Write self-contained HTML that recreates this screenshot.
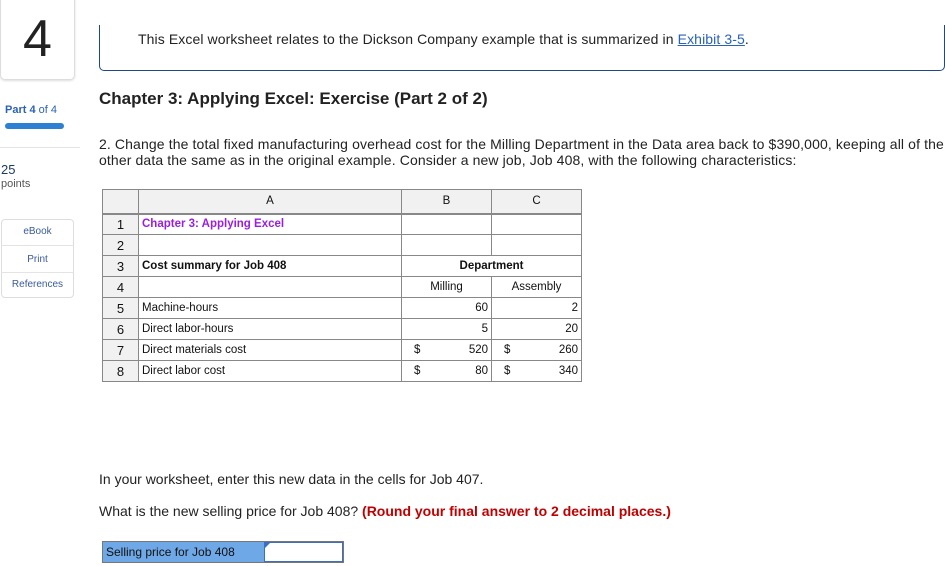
<!DOCTYPE html>
<html><head><meta charset="utf-8"><style>
*{margin:0;padding:0;box-sizing:border-box}
body{width:945px;height:566px;background:#fff;font-family:"Liberation Sans",sans-serif;color:#222;position:relative;overflow:hidden}
.a{position:absolute;white-space:nowrap}
table{position:absolute;left:102px;top:189px;border-collapse:collapse;font-size:11.5px;color:#111}
td{border:1px solid #888;height:21px;padding:0 3px;}
.h td{background:#f1f1f1;height:24px;text-align:center;border-bottom:2px solid #888}
.n{background:#f1f1f1;text-align:center;width:36px;font-size:13px}
.r{text-align:right}
</style></head><body>
<div class="a" style="left:0;top:-5px;width:75px;height:85px;border:1px solid #ddd;border-radius:5px;box-shadow:0 1px 2px #ddd"></div>
<div class="a" style="left:0;top:12px;width:75px;text-align:center;font-size:52px;color:#222;line-height:55px">4</div>
<div class="a" style="left:5px;top:104px;font-size:11px;color:#2a62b5"><b>Part 4</b> of 4</div>
<div class="a" style="left:5px;top:123px;width:59px;height:6px;border-radius:3px;background:#2e80d2"></div>
<div class="a" style="left:0;top:147px;width:80px;height:1px;background:#e4e4e4"></div>
<div class="a" style="left:1px;top:162px;font-size:13px;color:#1c3a66">25</div>
<div class="a" style="left:1px;top:178px;font-size:11px;color:#555">points</div>
<div class="a" style="left:1px;top:219px;width:73px;height:79px;border:1px solid #ddd;border-radius:4px"></div>
<div class="a" style="left:1px;top:245px;width:73px;height:1px;background:#e4e4e4"></div>
<div class="a" style="left:1px;top:272px;width:73px;height:1px;background:#e4e4e4"></div>
<div class="a" style="left:1px;top:226px;width:73px;text-align:center;font-size:10px;color:#3a5a9a">eBook</div>
<div class="a" style="left:1px;top:254px;width:73px;text-align:center;font-size:10px;color:#3a5a9a">Print</div>
<div class="a" style="left:1px;top:279px;width:73px;text-align:center;font-size:10px;color:#3a5a9a">References</div>

<div class="a" style="left:99px;top:25px;width:846px;height:46px;border:1.5px solid #1d4a85;border-top:none;border-radius:0 0 5px 5px"></div>
<div class="a" style="left:138px;top:31px;font-size:14px;color:#222;letter-spacing:0.1px">This Excel worksheet relates to the Dickson Company example that is summarized in <span style="color:#2a62b5;text-decoration:underline">Exhibit 3-5</span>.</div>
<div class="a" style="left:99px;top:89px;font-size:17px;font-weight:bold;color:#222">Chapter 3: Applying Excel: Exercise (Part 2 of 2)</div>
<div class="a" style="left:99px;top:136px;font-size:14px;line-height:16px;letter-spacing:0.12px">2. Change the total fixed manufacturing overhead cost for the Milling Department in the Data area back to $390,000, keeping all of the<br>other data the same as in the original example. Consider a new job, Job 408, with the following characteristics:</div>

<table>
<tr class="h"><td style="width:36px"></td><td style="width:263px">A</td><td style="width:90px">B</td><td style="width:90px">C</td></tr>
<tr><td class="n">1</td><td style="color:#9a1ee0;font-weight:bold">Chapter 3: Applying Excel</td><td></td><td></td></tr>
<tr><td class="n">2</td><td></td><td></td><td></td></tr>
<tr><td class="n">3</td><td style="font-weight:bold">Cost summary for Job 408</td><td colspan="2" style="text-align:center;font-weight:bold">Department</td></tr>
<tr><td class="n">4</td><td></td><td style="text-align:center">Milling</td><td style="text-align:center">Assembly</td></tr>
<tr><td class="n">5</td><td>Machine-hours</td><td class="r">60</td><td class="r">2</td></tr>
<tr><td class="n">6</td><td>Direct labor-hours</td><td class="r">5</td><td class="r">20</td></tr>
<tr><td class="n">7</td><td>Direct materials cost</td><td class="r"><span style="float:left;padding-left:9px">$</span>520</td><td class="r"><span style="float:left;padding-left:9px">$</span>260</td></tr>
<tr><td class="n">8</td><td>Direct labor cost</td><td class="r"><span style="float:left;padding-left:9px">$</span>80</td><td class="r"><span style="float:left;padding-left:9px">$</span>340</td></tr>
</table>

<div class="a" style="left:99px;top:471px;font-size:14px">In your worksheet, enter this new data in the cells for Job 407.</div>
<div class="a" style="left:99px;top:503px;font-size:14px">What is the new selling price for Job 408? <b style="color:#c00000">(Round your final answer to 2 decimal places.)</b></div>
<div class="a" style="left:102px;top:541px;width:242px;height:22px;border:1px solid #777;background:#fff"></div>
<div class="a" style="left:103px;top:542px;width:161px;height:20px;background:#6fa8e6;font-size:12px;padding:3px 3px;color:#111">Selling price for Job 408</div>
<div class="a" style="left:264px;top:542px;width:79px;height:20px;border:1px solid #3b6fbf"></div>
<div class="a" style="left:265px;top:543px;width:0;height:0;border-top:5px solid #3b6fbf;border-right:5px solid transparent"></div>
</body></html>
